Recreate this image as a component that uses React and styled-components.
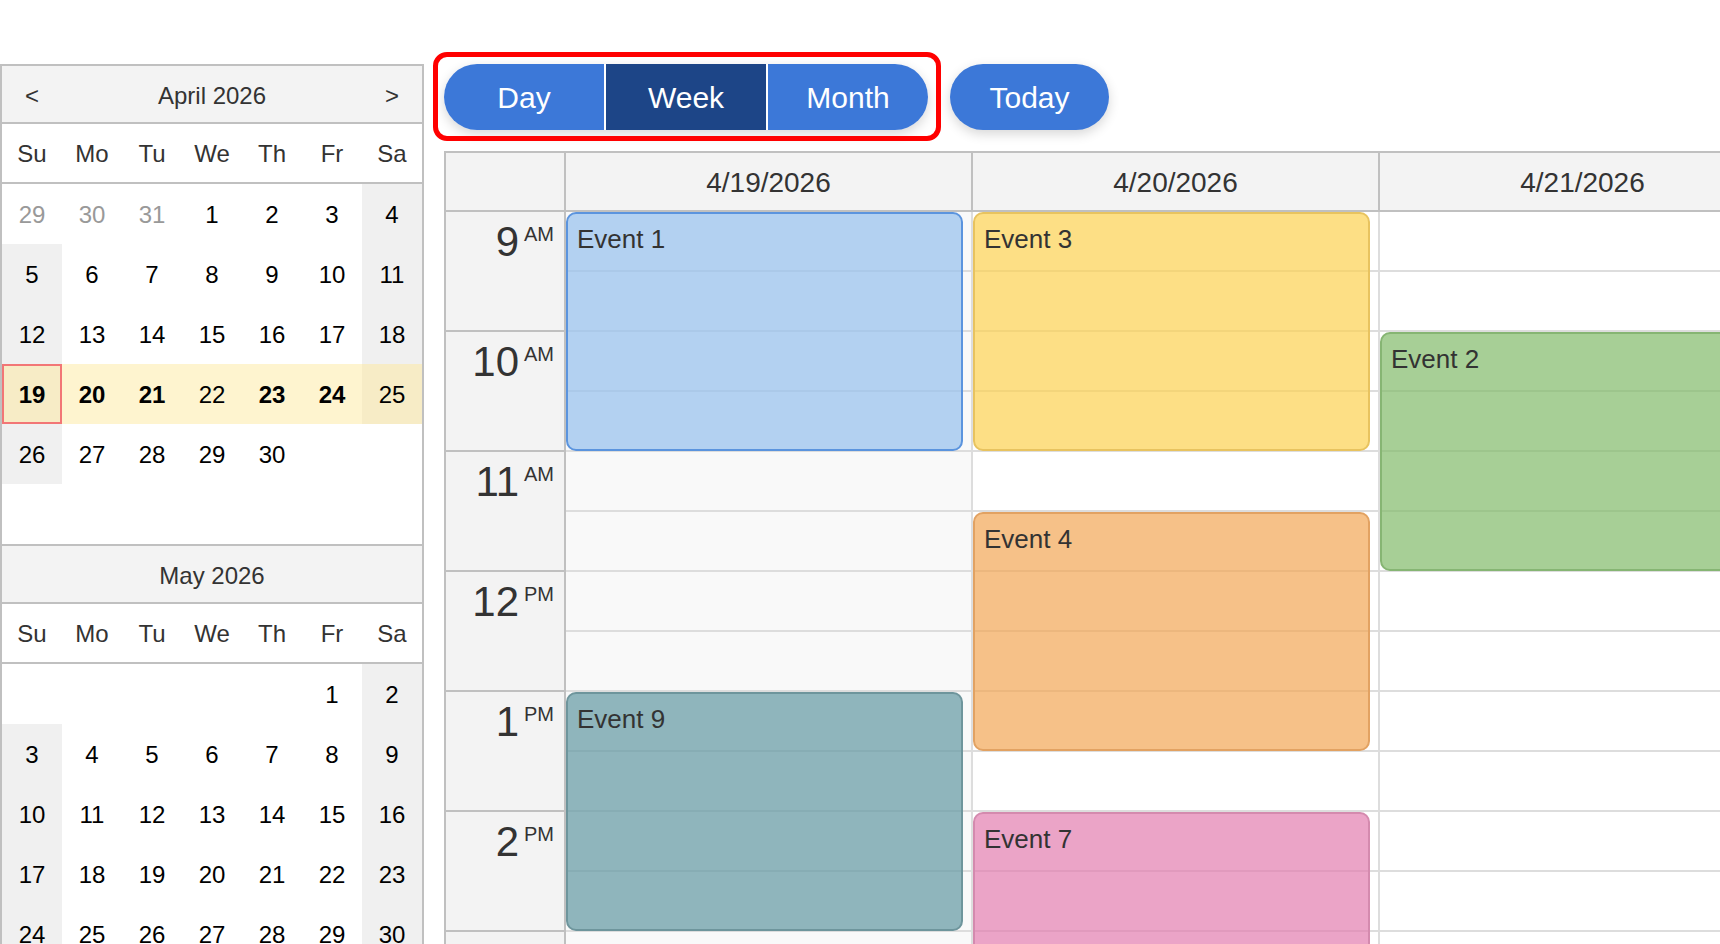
import React from "react";
import styled, { createGlobalStyle } from "styled-components";

const GlobalStyle = createGlobalStyle`
  *, *::before, *::after { box-sizing: border-box; }
  html, body { margin: 0; padding: 0; background: #fff; overflow: hidden; }
  body { font-family: "Liberation Sans", Arial, sans-serif; }
`;

/* ---------- data ---------- */
const WEEKDAYS = ["Su", "Mo", "Tu", "We", "Th", "Fr", "Sa"];
const SELECTED_WEEK = { month: 3, from: 19, to: 25 };
const TODAY = { month: 3, day: 19 };
const BUSY = { 3: [19, 20, 21, 23, 24] };

const START_HOUR = 9;
const END_HOUR = 18;
const HOUR_PX = 120;

const DAYS = [
  { label: "4/19/2026", weekend: true },
  { label: "4/20/2026", weekend: false },
  { label: "4/21/2026", weekend: false },
];

const EVENTS = [
  { day: 0, text: "Event 1", start: 9, end: 11, fill: "rgba(149,192,238,0.7)", border: "#5b94de" },
  { day: 0, text: "Event 9", start: 13, end: 15, fill: "rgba(99,152,162,0.7)", border: "#6e959c" },
  { day: 1, text: "Event 3", start: 9, end: 11, fill: "rgba(252,209,81,0.7)", border: "#e8c35f" },
  { day: 1, text: "Event 4", start: 11.5, end: 13.5, fill: "rgba(242,166,85,0.7)", border: "#e2a262" },
  { day: 1, text: "Event 7", start: 14, end: 16, fill: "rgba(226,126,175,0.7)", border: "#d48aae" },
  { day: 2, text: "Event 2", start: 10, end: 12, fill: "rgba(129,186,105,0.7)", border: "#86b573" },
];

function buildMonth(year, month, showPrev, showNext) {
  const startDow = new Date(year, month, 1).getDay();
  const daysInMonth = new Date(year, month + 1, 0).getDate();
  const prevDays = new Date(year, month, 0).getDate();
  const cells = [];
  for (let i = 0; i < 42; i++) {
    const d = i - startDow + 1;
    const dow = i % 7;
    if (d < 1) {
      cells.push(showPrev ? { key: i, label: prevDays + d, other: true } : { key: i, empty: true });
    } else if (d > daysInMonth) {
      cells.push(showNext ? { key: i, label: d - daysInMonth, other: true } : { key: i, empty: true });
    } else {
      const selected = month === SELECTED_WEEK.month && d >= SELECTED_WEEK.from && d <= SELECTED_WEEK.to;
      cells.push({
        key: i,
        label: d,
        weekend: dow === 0 || dow === 6,
        selected,
        today: month === TODAY.month && d === TODAY.day,
        busy: (BUSY[month] || []).includes(d),
      });
    }
  }
  return cells;
}

const MONTHS = [
  { title: "April 2026", arrows: true, cells: buildMonth(2026, 3, true, false) },
  { title: "May 2026", arrows: false, cells: buildMonth(2026, 4, false, true) },
];

/* ---------- layout ---------- */
const Page = styled.div`
  display: flex;
  align-items: flex-start;
  gap: 20px;
  width: 1720px;
  height: 944px;
  padding-top: 64px;
  overflow: hidden;
`;

const Main = styled.div`
  flex: 1;
  min-width: 0;
  display: flex;
  flex-direction: column;
  align-items: flex-start;
`;

/* ---------- navigator ---------- */
const Nav = styled.div`
  flex: none;
  width: 424px;
  border: 2px solid #c0c0c0;
  background: #fff;
`;

const MonthBlock = styled.div`
  & + & {
    border-top: 2px solid #c0c0c0;
  }
`;

const Grid7 = styled.div`
  display: grid;
  grid-template-columns: repeat(7, 60px);
`;

const MonthHeader = styled(Grid7)`
  height: 58px;
  padding-top: 4px;
  align-items: center;
  background: #f3f3f3;
  border-bottom: 2px solid #c0c0c0;
  color: #333;
  font-size: 24px;
`;

const NavArrow = styled.div`
  grid-column: ${(p) => p.$col};
  text-align: center;
  cursor: pointer;
`;

const MonthTitle = styled.div`
  grid-column: 2 / span 5;
  text-align: center;
`;

const WeekdayRow = styled(Grid7)`
  height: 60px;
  padding-top: 2px;
  align-items: center;
  border-bottom: 2px solid #c0c0c0;
`;

const Weekday = styled.div`
  text-align: center;
  font-size: 24px;
  color: #333;
`;

const cellBg = (p) => {
  if (p.$selected) return p.$weekend ? "#f7ecc6" : "#fef4cf";
  if (p.$weekend) return "#f0f0f0";
  return "#fff";
};

const DayCell = styled.div`
  height: 60px;
  padding-top: 1px;
  display: flex;
  align-items: center;
  justify-content: center;
  font-size: 24px;
  color: ${(p) => (p.$other ? "#999" : "#000")};
  font-weight: ${(p) => (p.$busy ? 700 : 400)};
  background: ${cellBg};
  border: 2px solid ${(p) => (p.$today ? "#f27676" : "transparent")};
`;

/* ---------- toolbar ---------- */
const Toolbar = styled.div`
  display: flex;
  align-items: center;
  gap: 22px;
  height: 66px;
  margin-bottom: 21px;
`;

const SegmentWrap = styled.div`
  position: relative;
`;

const Highlight = styled.div`
  position: absolute;
  left: -11px;
  top: -12px;
  right: -13px;
  bottom: -11px;
  border: 5px solid #ff0000;
  border-radius: 14px;
  pointer-events: none;
`;

const Segment = styled.div`
  display: flex;
  gap: 2px;
  background: #fff;
  border-radius: 33px;
  overflow: hidden;
  box-shadow: 0 4px 12px rgba(0, 0, 0, 0.16);
`;

const PillButton = styled.button`
  width: 160px;
  height: 66px;
  padding: 2px 0 0;
  border: 0;
  color: #fff;
  background: ${(p) => (p.$active ? "#1d4587" : "#3c78d8")};
  font-family: "Liberation Sans", Arial, sans-serif;
  font-size: 30px;
  cursor: pointer;
`;

const TodayButton = styled(PillButton)`
  width: 159px;
  border-radius: 33px;
  box-shadow: 0 4px 12px rgba(0, 0, 0, 0.16);
`;

/* ---------- calendar ---------- */
const Calendar = styled.div`
  width: max-content;
  border-top: 2px solid #c0c0c0;
  border-left: 2px solid #c0c0c0;
  color: #333;
`;

const HeaderRow = styled.div`
  display: flex;
  height: 59px;
  background: #f3f3f3;
  border-bottom: 2px solid #c0c0c0;
`;

const Corner = styled.div`
  flex: none;
  width: 120px;
  border-right: 2px solid #c0c0c0;
`;

const ColHeader = styled.div`
  flex: none;
  width: 407px;
  padding-top: 2px;
  display: flex;
  align-items: center;
  justify-content: center;
  border-right: 2px solid #c0c0c0;
  font-size: 28px;
`;

const Body = styled.div`
  display: flex;
`;

const TimeCol = styled.div`
  flex: none;
  width: 120px;
  background: #f3f3f3;
  border-right: 2px solid #c0c0c0;
`;

const HourCell = styled.div`
  height: ${HOUR_PX}px;
  display: flex;
  justify-content: flex-end;
  align-items: flex-start;
  gap: 5px;
  padding: 9px 10px 0 0;
  border-bottom: 2px solid #c0c0c0;
`;

const HourNum = styled.span`
  font-size: 42px;
  line-height: 1;
`;

const HourSuffix = styled.span`
  font-size: 20px;
  line-height: 1;
  margin-top: 3px;
`;

const DayCol = styled.div`
  position: relative;
  flex: none;
  width: 407px;
  background: ${(p) => (p.$weekend ? "#f9f9f9" : "#fff")};
  border-right: 2px solid #ddd;
`;

const Slot = styled.div`
  height: ${HOUR_PX / 2}px;
  border-bottom: 2px solid #ddd;
`;

const EventBox = styled.div`
  position: absolute;
  left: 0;
  right: 8px;
  padding: 10px 9px;
  border: 2px solid ${(p) => p.$border};
  border-radius: 10px;
  background: ${(p) => p.$fill};
  font-size: 26px;
  color: #333;
  overflow: hidden;
`;

const hourLabel = (h) => {
  const suffix = h < 12 ? "AM" : "PM";
  const n = h % 12 === 0 ? 12 : h % 12;
  return [String(n), suffix];
};

export default function App() {
  const hours = [];
  for (let h = START_HOUR; h < END_HOUR; h++) hours.push(h);
  const slots = hours.flatMap((h) => [h, h + 0.5]);

  return (
    <>
      <GlobalStyle />
      <Page>
        <Nav>
          {MONTHS.map((m) => (
            <MonthBlock key={m.title}>
              <MonthHeader>
                {m.arrows && <NavArrow $col={1}>&lt;</NavArrow>}
                <MonthTitle>{m.title}</MonthTitle>
                {m.arrows && <NavArrow $col={7}>&gt;</NavArrow>}
              </MonthHeader>
              <WeekdayRow>
                {WEEKDAYS.map((w) => (
                  <Weekday key={w}>{w}</Weekday>
                ))}
              </WeekdayRow>
              <Grid7>
                {m.cells.map((c) => (
                  <DayCell
                    key={c.key}
                    $other={c.other}
                    $weekend={c.weekend}
                    $selected={c.selected}
                    $today={c.today}
                    $busy={c.busy}
                  >
                    {c.empty ? "" : c.label}
                  </DayCell>
                ))}
              </Grid7>
            </MonthBlock>
          ))}
        </Nav>

        <Main>
          <Toolbar>
            <SegmentWrap>
              <Segment>
                <PillButton>Day</PillButton>
                <PillButton $active>Week</PillButton>
                <PillButton>Month</PillButton>
              </Segment>
              <Highlight />
            </SegmentWrap>
            <TodayButton>Today</TodayButton>
          </Toolbar>

          <Calendar>
            <HeaderRow>
              <Corner />
              {DAYS.map((d) => (
                <ColHeader key={d.label}>{d.label}</ColHeader>
              ))}
            </HeaderRow>
            <Body>
              <TimeCol>
                {hours.map((h) => {
                  const [n, s] = hourLabel(h);
                  return (
                    <HourCell key={h}>
                      <HourNum>{n}</HourNum>
                      <HourSuffix>{s}</HourSuffix>
                    </HourCell>
                  );
                })}
              </TimeCol>
              {DAYS.map((d, i) => (
                <DayCol key={d.label} $weekend={d.weekend}>
                  {slots.map((s) => (
                    <Slot key={s} />
                  ))}
                  {EVENTS.filter((e) => e.day === i).map((e) => (
                    <EventBox
                      key={e.text}
                      $fill={e.fill}
                      $border={e.border}
                      style={{
                        top: (e.start - START_HOUR) * HOUR_PX,
                        height: (e.end - e.start) * HOUR_PX - 1,
                      }}
                    >
                      {e.text}
                    </EventBox>
                  ))}
                </DayCol>
              ))}
            </Body>
          </Calendar>
        </Main>
      </Page>
    </>
  );
}
